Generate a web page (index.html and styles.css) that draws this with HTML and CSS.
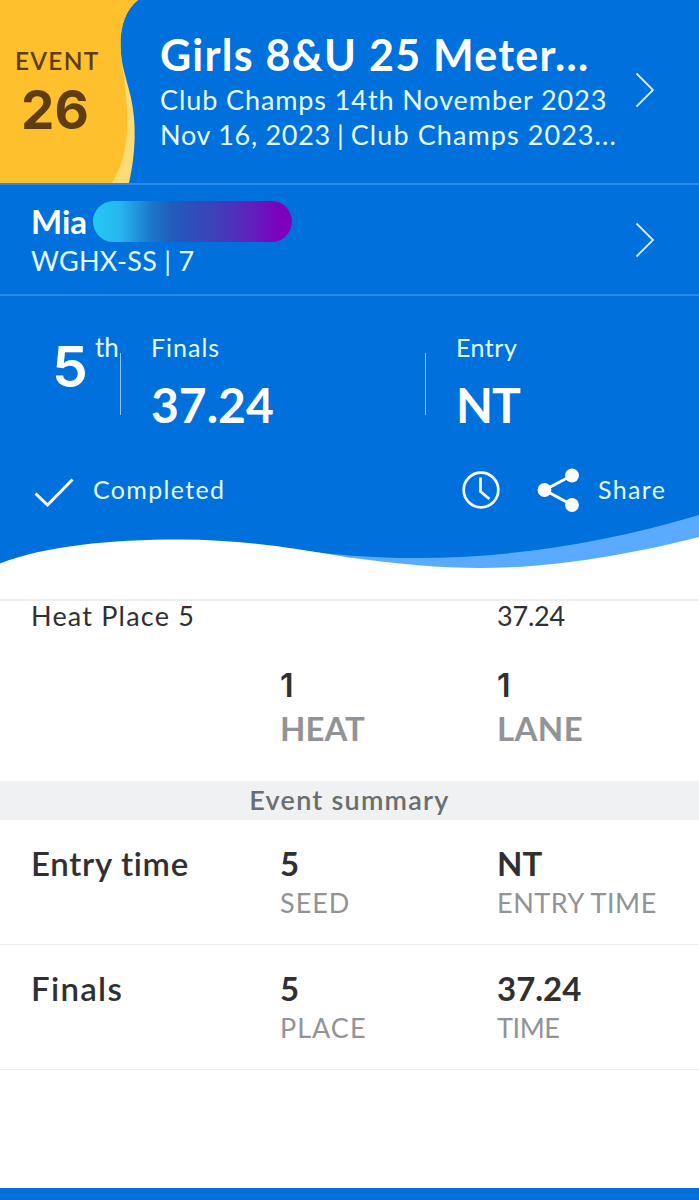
FILE: index.html
```
<!DOCTYPE html>
<html lang="en">
<head>
<meta charset="utf-8">
<title>Event result</title>
<link rel="stylesheet" href="styles.css">
</head>
<body>
<main class="page">
  <section class="hero">
    <header class="event">
      <div class="badge">
        <svg class="badge-bg" viewBox="0 0 140 183" aria-hidden="true">
          <path fill="#ffdc73" d="M0 0H138C126 9 120.500 26 120.500 43C120.500 66 127 79 131 98C136.500 123 136 152 129 183H0Z"/>
          <path fill="#ffc02e" d="M0 0H138C126 9 120.500 26 120.500 43C120.500 58 123.500 72 125.500 91C129 124 129 155 112 183H0Z"/>
        </svg>
        <span class="badge-label">EVENT</span>
        <span class="badge-number">26</span>
      </div>
      <div class="event-info">
        <h1 class="title">Girls 8&amp;U 25 Meter...</h1>
        <p class="meet">Club Champs 14th November 2023</p>
        <p class="meet dates">Nov 16, 2023 <span class="bar">|</span> <span class="venue">Club Champs 2023...</span></p>
      </div>
      <svg class="chevron" viewBox="0 0 20 36"><path d="M1.500 1.500L18 18L1.500 34.500"/></svg>
    </header>
    <div class="athlete">
      <div class="athlete-info">
        <div class="name">Mia<span class="pill"></span></div>
        <div class="team">WGHX-SS | 7</div>
      </div>
      <svg class="chevron" viewBox="0 0 20 36"><path d="M1.500 1.500L18 18L1.500 34.500"/></svg>
    </div>
    <div class="stats">
      <div class="rank"><span class="rank-number">5</span><span class="rank-suffix">th</span></div>
      <div class="stat"><span class="stat-label">Finals</span><span class="stat-value">37.24</span></div>
      <div class="stat"><span class="stat-label entry">Entry</span><span class="stat-value nt">NT</span></div>
    </div>
    <div class="actions">
      <svg class="check" viewBox="0 0 40 30"><path d="M1.500 16.500L13.500 28L38.500 2.500"/></svg>
      <span class="action-text">Completed</span>
      <svg class="clock" viewBox="0 0 40 40"><circle cx="20" cy="20" r="17.300"/><path d="M19.500 7.500V21.500L28.500 29"/></svg>
      <svg class="share" viewBox="0 0 44 44"><path d="M35 7.500L7.500 22L35 37"/><circle cx="35" cy="7.500" r="6.900"/><circle cx="7.500" cy="22" r="6.900"/><circle cx="35" cy="37" r="6.900"/></svg>
      <span class="action-text">Share</span>
    </div>
    <svg class="wave" viewBox="0 0 699 86" aria-hidden="true">
      <path fill="#5aabff" d="M300 37C410 53 550 47 699 2V86H300Z"/>
      <path fill="#fff" d="M0 50.500C45 33 110 26.500 180 26.500C240 26.500 292 35 349 44.500C400 51 440 55 480 55C560 55 640 39 699 24V86H0Z"/>
    </svg>
  </section>
  <section class="heat">
    <div class="row heat-place"><span>Heat Place 5</span><span></span><span class="tight">37.24</span></div>
    <div class="row">
      <span></span>
      <div class="cell"><span class="one">1</span><span class="big-label">HEAT</span></div>
      <div class="cell"><span class="one">1</span><span class="big-label lane">LANE</span></div>
    </div>
  </section>
  <h2 class="band">Event summary</h2>
  <section class="row summary">
    <span class="row-title">Entry time</span>
    <div class="cell"><span class="value">5</span><span class="label">SEED</span></div>
    <div class="cell"><span class="value">NT</span><span class="label entry-time">ENTRY TIME</span></div>
  </section>
  <section class="row summary">
    <span class="row-title finals">Finals</span>
    <div class="cell"><span class="value">5</span><span class="label">PLACE</span></div>
    <div class="cell"><span class="value">37.24</span><span class="label time">TIME</span></div>
  </section>
  <footer class="bottom-bar"></footer>
</main>
</body>
</html>
```
FILE: styles.css
```
* { box-sizing: border-box; }
body { margin: 0; background: #fff; font-family: Lato, "Open Sans", sans-serif; color: #303032; }
h1, h2, p { margin: 0; }
svg { display: block; flex: none; }
.page { width: 699px; height: 1200px; display: flex; flex-direction: column; overflow: hidden; }

.hero { height: 599px; background: #0070dc; color: #fff; display: flex; flex-direction: column; }
.event { height: 185px; display: flex; border-bottom: 2px solid #288bec; }
.badge { position: relative; width: 160px; height: 183px; padding: 45px 0 0 15px; display: flex; flex-direction: column; color: #5f3d10; }
.badge-bg { position: absolute; left: 0; top: 0; width: 140px; height: 183px; }
.badge-label, .badge-number { position: relative; }
.badge-label { font-size: 24.500px; line-height: 31px; letter-spacing: 1.200px; font-weight: 600; }
.badge-number { font-family: Inter, sans-serif; font-size: 53px; line-height: 69px; letter-spacing: 0; font-weight: 700; padding-left: 6px; }
.event-info { width: 475px; padding-top: 29px; white-space: nowrap; }
.title { font-size: 43px; line-height: 51px; letter-spacing: 1.240px; font-weight: 700; }
.meet { font-size: 27px; line-height: 35px; letter-spacing: .900px; color: #e4fbff; }
.meet:nth-of-type(1) { padding-top: 2px; }
.dates { letter-spacing: .720px; }
.bar { margin: 0 -1.500px; }
.venue { letter-spacing: 1.080px; }
.chevron { width: 20px; height: 36px; fill: none; stroke: #d6eeff; stroke-width: 1.800; }
.event .chevron { margin-top: 72px; }

.athlete { height: 111px; display: flex; border-bottom: 2px solid #288bec; padding-left: 31px; }
.athlete-info { width: 604px; padding-top: 16px; }
.name { display: flex; align-items: center; height: 41px; font-size: 33px; line-height: 41px; font-weight: 700; }
.pill { width: 199px; height: 41px; margin-left: 6px; border-radius: 21px; background: linear-gradient(90deg, #26c8f5 0%, #25b5ee 14%, #1b78cc 29%, #215bbb 40%, #3c42b9 60%, #6020bd 80%, #7c00bd 93%, #7c00bd 100%); }
.team { font-size: 27px; line-height: 38px; letter-spacing: .260px; color: #e4fbff; }
.athlete .chevron { margin-top: 37px; }

.stats { display: flex; height: 158px; padding-top: 34px; }
.rank { flex: none; width: 120px; display: flex; padding-left: 52px; }
.rank-number { width: 43px; font-family: Inter, sans-serif; font-size: 57px; line-height: 73px; font-weight: 600; }
.rank-suffix { font-size: 26px; line-height: 34px; color: #e4fbff; }
.stat { flex: none; position: relative; width: 305px; display: flex; flex-direction: column; padding-left: 31px; }
.stat::before { content: ""; position: absolute; left: 0; top: 23px; width: 1px; height: 62px; background: #8bc8fa; }
.stat:last-child { width: 274px; }
.stat-label { font-size: 25px; line-height: 34px; letter-spacing: 1px; color: #e4fbff; }
.stat-label.entry { letter-spacing: .500px; }
.stat-value { font-size: 48px; line-height: 81px; font-weight: 700; }
.stat-value.nt { letter-spacing: -1px; }

.actions { height: 60px; display: flex; align-items: flex-start; padding: 15px 0 0 34px; }
.action-text { font-size: 25px; line-height: 42px; letter-spacing: 1.340px; color: #e4fbff; }
.check { width: 40px; height: 30px; margin: 9px 19px 0 0; fill: none; stroke: #fff; stroke-width: 3; }
.check + .action-text { width: 368px; }
.clock { width: 40px; height: 40px; margin-top: 1.500px; fill: none; stroke: #f2ffff; stroke-width: 2.700; }
.share { width: 44px; height: 44px; margin: 0 17px 0 36px; fill: #fff; stroke: #fff; }
.share path { fill: none; stroke-width: 3; }
.share circle { stroke: none; }
.wave { width: 699px; height: 86px; }

.row { display: grid; grid-template-columns: 249px 217px 1fr; padding-left: 31px; }
.cell { display: flex; flex-direction: column; }
.heat { height: 182px; border-top: 2px solid #eee; }
.heat-place { height: 63px; font-size: 27px; line-height: 30px; letter-spacing: 1.200px; }
.heat-place .tight { letter-spacing: -.200px; }
.one { font: 600 32px/43px Inter, sans-serif; }
.big-label { font-size: 33px; line-height: 42px; font-weight: 700; color: #929396; }
.big-label.lane { letter-spacing: .400px; }
.band { height: 39px; background: #eff1f3; color: #6c6d6f; text-align: center; font-size: 27px; line-height: 38px; font-weight: 600; letter-spacing: 1.250px; }
.summary { height: 125px; padding-top: 23px; border-bottom: 1px solid #ededee; }
.row-title { font-size: 33px; line-height: 41px; font-weight: 600; letter-spacing: .700px; }
.row-title.finals { letter-spacing: 1.300px; }
.value { font-size: 33px; line-height: 41px; font-weight: 700; }
.label { font-size: 27px; line-height: 38px; letter-spacing: 1px; color: #929396; }
.label.entry-time { letter-spacing: .550px; }
.label.time { letter-spacing: -.400px; }
.bottom-bar { height: 12px; margin-top: auto; background: #0070dc; }
```
